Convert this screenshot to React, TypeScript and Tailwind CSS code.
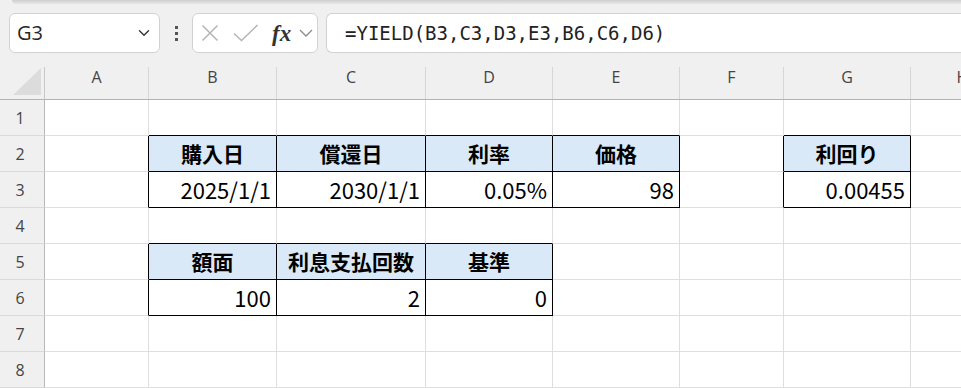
import { ChevronDown } from 'lucide-react'

const COLS = [
  { key: 'A', w: 'w-[104px]' },
  { key: 'B', w: 'w-[128px]' },
  { key: 'C', w: 'w-[149px]' },
  { key: 'D', w: 'w-[127px]' },
  { key: 'E', w: 'w-[127px]' },
  { key: 'F', w: 'w-[104px]' },
  { key: 'G', w: 'w-[127px]' },
  { key: 'H', w: 'w-[104px]' },
]

const ROWS = [1, 2, 3, 4, 5, 6, 7, 8]

const CELLS: Record<string, { v: string; head?: boolean }> = {
  B2: { v: '購入日', head: true },
  C2: { v: '償還日', head: true },
  D2: { v: '利率', head: true },
  E2: { v: '価格', head: true },
  G2: { v: '利回り', head: true },
  B3: { v: '2025/1/1' },
  C3: { v: '2030/1/1' },
  D3: { v: '0.05%' },
  E3: { v: '98' },
  G3: { v: '0.00455' },
  B5: { v: '額面', head: true },
  C5: { v: '利息支払回数', head: true },
  D5: { v: '基準', head: true },
  B6: { v: '100' },
  C6: { v: '2' },
  D6: { v: '0' },
}

const inTable = (ci: number, r: number) => {
  const col = COLS[ci]
  if (!col) return false
  return `${col.key}${r}` in CELLS
}

function FormulaBar() {
  return (
    <div className="bg-[#f0f0f0]">
      <div className="ml-[12px] h-[4px] rounded-bl-[6px] bg-linear-to-b from-[#cfcfcf] to-[#e7e7e7]" />
      <div className="mt-[9px] flex h-[40px] pl-[9px]">
        {/* name box */}
        <div className="flex w-[151px] items-center justify-between rounded-[6px] border border-[#d2d2d2] bg-white pl-[7px] pr-[6px]">
          <span className="font-['Open_Sans','Noto_Sans',sans-serif] text-[20px] text-[#262626]">G3</span>
          <ChevronDown size={18} strokeWidth={1.8} className="text-[#333]" />
        </div>

        <div className="flex w-[32px] flex-col items-center justify-center gap-[3px]">
          <span className="h-[3px] w-[3px] bg-[#555]" />
          <span className="h-[3px] w-[3px] bg-[#555]" />
          <span className="h-[3px] w-[3px] bg-[#555]" />
        </div>

        {/* fx box */}
        <div className="flex w-[126px] items-center rounded-[6px] border border-[#d2d2d2] bg-white pl-[8px]">
          <svg width="18" height="18" viewBox="0 0 18 18" className="shrink-0">
            <path d="M1.5 1.5 L16.5 16.5 M16.5 1.5 L1.5 16.5" stroke="#b5b5b5" strokeWidth="1.5" fill="none" />
          </svg>
          <svg width="26" height="18" viewBox="0 0 26 18" className="ml-[14px] shrink-0">
            <path d="M1 9.5 L8.5 16.5 L24.5 1" stroke="#b5b5b5" strokeWidth="1.5" fill="none" />
          </svg>
          <span className="ml-[13px] font-['Liberation_Serif',serif] text-[23px] font-bold italic leading-none text-[#333]">fx</span>
          <svg width="14" height="8" viewBox="0 0 14 8" className="ml-[8px] shrink-0">
            <path d="M1 1 L7 7 L13 1" stroke="#8a8a8a" strokeWidth="1.3" fill="none" />
          </svg>
        </div>

        {/* formula input */}
        <div className="ml-[8px] flex flex-1 items-center rounded-l-[6px] border border-r-0 border-[#d2d2d2] bg-white pl-[18px]">
          <span className="font-['DejaVu_Sans_Mono',monospace] text-[19px] text-[#222]">=YIELD(B3,C3,D3,E3,B6,C6,D6)</span>
        </div>
      </div>
    </div>
  )
}

function ColumnHeader() {
  return (
    <div className="flex h-[47px] border-b border-b-[#b3b3b3] bg-[#f0f0f0]">
      <div className="flex w-[45px] shrink-0 pt-[14px]">
        <div className="flex h-full w-full items-start justify-end border-r border-r-[#c8c8c8] pr-[3px] pt-[1px]">
          <svg width="28" height="27" viewBox="0 0 28 27">
            <polygon points="28,0 28,27 0,27" fill="#dcdcdc" />
          </svg>
        </div>
      </div>
      {COLS.map((c) => (
        <div key={c.key} className={`${c.w} shrink-0 pt-[14px]`}>
          <div className="flex h-full items-center justify-center border-r border-r-[#d6d6d6] pb-[13px] font-['Open_Sans','Noto_Sans',sans-serif] text-[16px] text-[#444]">
            {c.key}
          </div>
        </div>
      ))}
    </div>
  )
}

function Row({ r }: { r: number }) {
  return (
    <div className="flex h-[36px]">
      <div className="flex w-[45px] shrink-0 items-center justify-center border-b border-r border-b-[#dadada] border-r-[#b8b8b8] bg-[#f0f0f0] pr-[4px] font-['Open_Sans','Noto_Sans',sans-serif] text-[16px] text-[#444]">
        {r}
      </div>
      {COLS.map((c, ci) => {
        const cell = CELLS[`${c.key}${r}`]
        const right = inTable(ci, r) || inTable(ci + 1, r) ? 'border-r-black' : 'border-r-[#dedede]'
        const bottom = inTable(ci, r) || inTable(ci, r + 1) ? 'border-b-black' : 'border-b-[#dedede]'
        return (
          <div
            key={c.key}
            className={`${c.w} flex shrink-0 items-center border-b border-r ${right} ${bottom} ${
              cell?.head ? 'justify-center bg-[#dae9f8] text-[21px] font-bold' : 'justify-end bg-white pr-[5px] text-[22px]'
            } font-['Noto_Sans_CJK_JP',sans-serif] text-black`}
          >
            {cell?.v}
          </div>
        )
      })}
    </div>
  )
}

export default function App() {
  return (
    <div className="h-[388px] w-[961px] overflow-hidden bg-white">
      <FormulaBar />
      <ColumnHeader />
      {ROWS.map((r) => (
        <Row key={r} r={r} />
      ))}
    </div>
  )
}
